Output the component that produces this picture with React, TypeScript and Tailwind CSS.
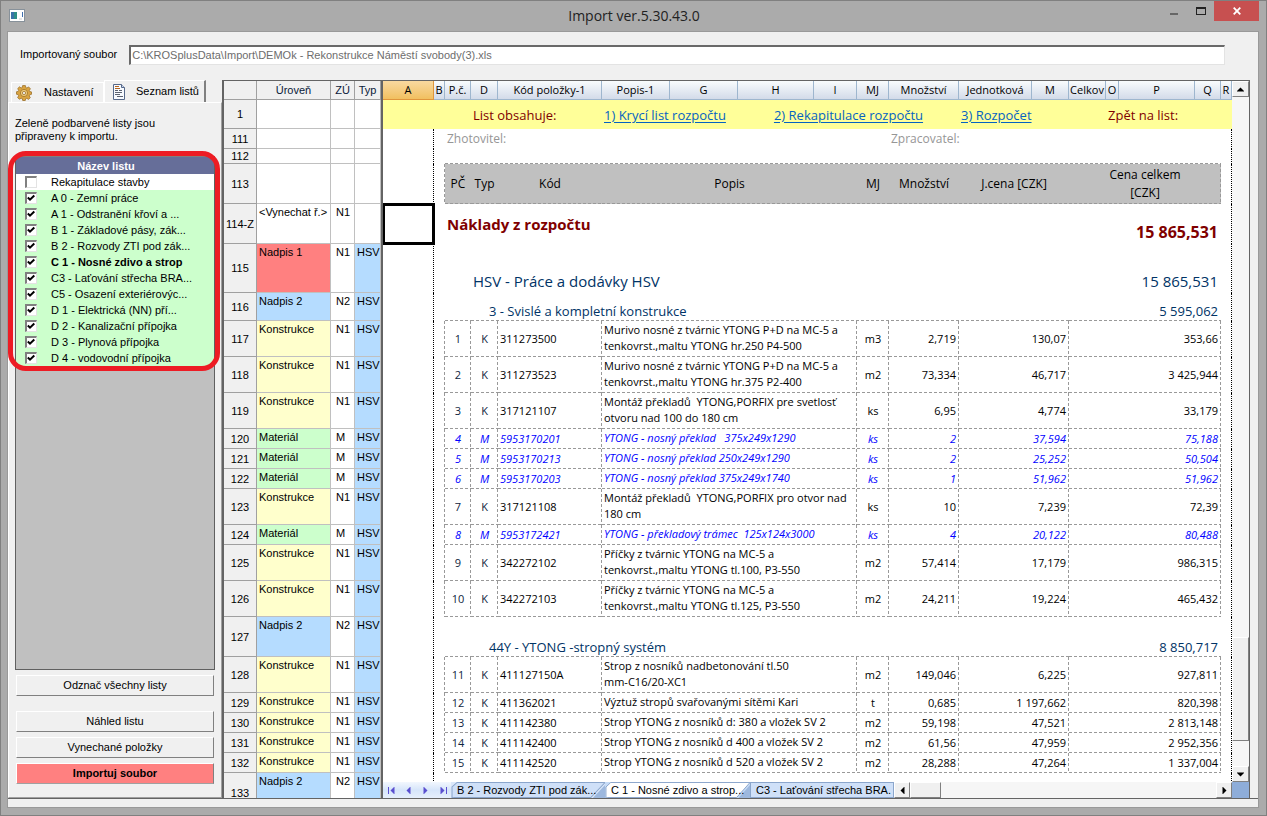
import { useState } from "react";

type Level = { no: string; h: string; level: string; zu: string; typ: string };

// výšky řádků jsou společné pro mřížku úrovní i pro list
const H = {
  r15: "h-[15px]",
  r20: "h-[20px]",
  r28: "h-[28px]",
  r29: "h-[29px]",
  r36: "h-[36px]",
  r40: "h-[40px]",
  r49: "h-[49px]",
};

const levels: Level[] = [
  { no: "1", h: H.r29, level: "", zu: "", typ: "" },
  { no: "111", h: H.r20, level: "", zu: "", typ: "" },
  { no: "112", h: H.r15, level: "", zu: "", typ: "" },
  { no: "113", h: H.r40, level: "", zu: "", typ: "" },
  { no: "114-Z", h: H.r40, level: "<Vynechat ř.>", zu: "N1", typ: "" },
  { no: "115", h: H.r49, level: "Nadpis 1", zu: "N1", typ: "HSV" },
  { no: "116", h: H.r28, level: "Nadpis 2", zu: "N2", typ: "HSV" },
  { no: "117", h: H.r36, level: "Konstrukce", zu: "N1", typ: "HSV" },
  { no: "118", h: H.r36, level: "Konstrukce", zu: "N1", typ: "HSV" },
  { no: "119", h: H.r36, level: "Konstrukce", zu: "N1", typ: "HSV" },
  { no: "120", h: H.r20, level: "Materiál", zu: "M", typ: "HSV" },
  { no: "121", h: H.r20, level: "Materiál", zu: "M", typ: "HSV" },
  { no: "122", h: H.r20, level: "Materiál", zu: "M", typ: "HSV" },
  { no: "123", h: H.r36, level: "Konstrukce", zu: "N1", typ: "HSV" },
  { no: "124", h: H.r20, level: "Materiál", zu: "M", typ: "HSV" },
  { no: "125", h: H.r36, level: "Konstrukce", zu: "N1", typ: "HSV" },
  { no: "126", h: H.r36, level: "Konstrukce", zu: "N1", typ: "HSV" },
  { no: "127", h: H.r40, level: "Nadpis 2", zu: "N2", typ: "HSV" },
  { no: "128", h: H.r36, level: "Konstrukce", zu: "N1", typ: "HSV" },
  { no: "129", h: H.r20, level: "Konstrukce", zu: "N1", typ: "HSV" },
  { no: "130", h: H.r20, level: "Konstrukce", zu: "N1", typ: "HSV" },
  { no: "131", h: H.r20, level: "Konstrukce", zu: "N1", typ: "HSV" },
  { no: "132", h: H.r20, level: "Konstrukce", zu: "N1", typ: "HSV" },
  { no: "133", h: H.r40, level: "Nadpis 2", zu: "N2", typ: "HSV" },
];

const levelColors: Record<string, string> = {
  "Nadpis 1": "bg-[#ff8080]",
  "Nadpis 2": "bg-[#b5dcff]",
  Konstrukce: "bg-[#ffffcc]",
  Materiál: "bg-[#ccffcc]",
};

// P.č., typ, kód, popis, MJ, množství, J.cena, cena celkem
type Item = [string, string, string, string, string, string, string, string];

const walls: Item[] = [
  ["1", "K", "311273500", "Murivo nosné z tvárnic YTONG P+D na MC-5 a\ntenkovrst.,maltu YTONG hr.250 P4-500", "m3", "2,719", "130,07", "353,66"],
  ["2", "K", "311273523", "Murivo nosné z tvárnic YTONG P+D na MC-5 a\ntenkovrst.,maltu YTONG hr.375 P2-400", "m2", "73,334", "46,717", "3 425,944"],
  ["3", "K", "317121107", "Montáž překladů  YTONG,PORFIX pre svetlosť\notvoru nad 100 do 180 cm", "ks", "6,95", "4,774", "33,179"],
  ["4", "M", "5953170201", "YTONG - nosný překlad   375x249x1290", "ks", "2", "37,594", "75,188"],
  ["5", "M", "5953170213", "YTONG - nosný překlad 250x249x1290", "ks", "2", "25,252", "50,504"],
  ["6", "M", "5953170203", "YTONG - nosný překlad 375x249x1740", "ks", "1", "51,962", "51,962"],
  ["7", "K", "317121108", "Montáž překladů  YTONG,PORFIX pro otvor nad\n180 cm", "ks", "10", "7,239", "72,39"],
  ["8", "M", "5953172421", "YTONG - překladový trámec  125x124x3000", "ks", "4", "20,122", "80,488"],
  ["9", "K", "342272102", "Příčky z tvárnic YTONG na MC-5 a\ntenkovrst.,maltu YTONG tl.100, P3-550", "m2", "57,414", "17,179", "986,315"],
  ["10", "K", "342272103", "Příčky z tvárnic YTONG na MC-5 a\ntenkovrst.,maltu YTONG tl.125, P3-550", "m2", "24,211", "19,224", "465,432"],
];

const ceilings: Item[] = [
  ["11", "K", "411127150A", "Strop z nosníků nadbetonování tl.50\nmm-C16/20-XC1", "m2", "149,046", "6,225", "927,811"],
  ["12", "K", "411362021", "Výztuž stropů svařovanými sítěmi Kari", "t", "0,685", "1 197,662", "820,398"],
  ["13", "K", "411142380", "Strop YTONG z nosníků d: 380 a vložek SV 2", "m2", "59,198", "47,521", "2 813,148"],
  ["14", "K", "411142400", "Strop YTONG z nosníků d 400 a vložek SV 2", "m2", "61,56", "47,959", "2 952,356"],
  ["15", "K", "411142520", "Strop YTONG z nosníků d 520 a vložek SV 2", "m2", "28,288", "47,264", "1 337,004"],
];

const columns = [
  ["A", "w-[51px]"],
  ["B", "w-[11px]"],
  ["P.č.", "w-[26px]"],
  ["D", "w-[27px]"],
  ["Kód položky-1", "w-[104px]"],
  ["Popis-1", "w-[68px]"],
  ["G", "w-[68px]"],
  ["H", ""],
  ["I", "w-[43px]"],
  ["MJ", "w-[32px]"],
  ["Množství", "w-[70px]"],
  ["Jednotková", "w-[73px]"],
  ["M", "w-[37px]"],
  ["Celkov", "w-[37px]"],
  ["O", "w-[13px]"],
  ["P", "w-[76px]"],
  ["Q", "w-[26px]"],
  ["R", "w-[11px]"],
];

const initialSheets = [
  { name: "Rekapitulace stavby", checked: false },
  { name: "A 0 - Zemní práce", checked: true },
  { name: "A 1 - Odstranění křoví a ...", checked: true },
  { name: "B 1 - Základové pásy, zák...", checked: true },
  { name: "B 2 - Rozvody ZTI pod zák...", checked: true },
  { name: "C 1 - Nosné zdivo a strop", checked: true, active: true },
  { name: "C3 - Laťování střecha BRA...", checked: true },
  { name: "C5 - Osazení exteriérovýc...", checked: true },
  { name: "D 1 - Elektrická (NN) pří...", checked: true },
  { name: "D 2 - Kanalizační přípojka", checked: true },
  { name: "D 3 - Plynová přípojka", checked: true },
  { name: "D 4 - vodovodní přípojka", checked: true },
];

// čárkované čáry buněk: spodní, pravá a obě dohromady
const dashB =
  "bg-[repeating-linear-gradient(90deg,#999_0_3px,transparent_3px_5px)] bg-[length:100%_1px] bg-bottom bg-no-repeat";
const dashR =
  "bg-[repeating-linear-gradient(#999_0_3px,transparent_3px_5px)] bg-[length:1px_100%] bg-right bg-no-repeat";
const dashBR =
  "bg-[repeating-linear-gradient(90deg,#999_0_3px,transparent_3px_5px),repeating-linear-gradient(#999_0_3px,transparent_3px_5px)] bg-[length:100%_1px,1px_100%] bg-[position:bottom,right] bg-no-repeat";

const raised = "border border-t-white border-l-white border-r-[#808080] border-b-[#808080] bg-[#f0f0f0]";

function GearIcon() {
  return (
    <svg className="h-4 w-4 flex-none" viewBox="0 0 16 16" aria-hidden="true">
      <g fill="#d9a441" stroke="#94661c" strokeWidth=".7">
        <path d="M6.6.6h2.8l.4 1.9 1.1.5 1.7-1.1 1.8 1.9-1.1 1.7.5 1.1 1.7.3v2.4l-1.8.5-.5 1.1 1.1 1.7-1.8 1.8-1.7-1.1-1.1.5-.4 1.7H6.7l-.4-1.8-1.2-.5-1.7 1.1-1.8-1.8 1.1-1.7-.5-1.2-1.8-.4V6.8l1.8-.4.5-1.1-1-1.7 1.8-1.8L5.1 3l1.1-.5z" />
        <circle cx="8" cy="8" r="3.6" fill="#f0cd7d" />
        <circle cx="8" cy="8" r="1.6" fill="#f0f0f0" />
      </g>
    </svg>
  );
}

function DocIcon() {
  return (
    <svg className="h-4 w-3 flex-none" viewBox="0 0 12 16" aria-hidden="true">
      <path d="M.5.5h8l3 3v12H.5z" fill="#f7faff" stroke="#56698a" />
      <path d="M8.5.5v3h3" fill="#c9d6ea" stroke="#56698a" />
      <path d="M2 2.5h4M2 4.5h5" stroke="#b5651d" />
      <path d="M2 6.5h3M6 6.5h3M2 8.5h7M2 10.5h5M4 12.5h6" stroke="#5b6270" />
    </svg>
  );
}

function Arrow({ d }: { d: string }) {
  return (
    <svg className="h-[7px] w-[7px]" viewBox="0 0 7 7" aria-hidden="true">
      <path d={d} fill="currentColor" />
    </svg>
  );
}

const UP = "M-.5 5.500 3.500 1.500 7.500 5.500z";
const DOWN = "M-.5 1.500 3.500 5.500 7.500 1.500z";
const LEFT = "M5.500-.5 1.500 3.500 5.500 7.500z";
const RIGHT = "M1.500-.5 5.500 3.500 1.500 7.500z";

function TitleBar() {
  return (
    <header className="flex h-[30px] flex-none items-start pr-[7px] text-[#222]">
      <div className="flex w-[135px] pt-[8px] pl-[8px]">
        <svg className="h-[13px] w-4" viewBox="0 0 16 13" aria-hidden="true">
          <rect x=".5" y=".5" width="15" height="12" fill="#fff" stroke="#87919a" />
          <rect x="2" y="3" width="6" height="7" fill="#2f8f86" />
          <path d="M2 3h3v7H2z" fill="#3b73a8" />
          <path d="M13.500 3v5" stroke="#3f6fb0" />
          <path d="M10 10h3" stroke="#ccc" />
        </svg>
      </div>
      <h1 className="flex-1 pt-[4px] pl-2 text-center font-['Open_Sans',sans-serif] text-[14px] leading-[22px]">
        Import ver.5.30.43.0
      </h1>
      <div className="flex w-[135px] justify-end">
        <button aria-label="Minimalizovat" className="flex h-5 w-[27px] justify-center pt-3">
          <span className="h-[2px] w-2 bg-[#666]" />
        </button>
        <button aria-label="Maximalizovat" className="flex h-5 w-[27px] justify-center pt-[6px]">
          <span className="h-2 w-[10px] border border-t-2 border-[#222]" />
        </button>
        <button aria-label="Zavřít" className="flex h-5 w-[45px] items-center justify-center bg-[#c75050] text-white">
          <svg className="h-2 w-2" viewBox="0 0 8 8" aria-hidden="true">
            <path d="M.7.7l6.600 6.600M7.300.7.7 7.300" stroke="currentColor" strokeWidth="1.8" />
          </svg>
        </button>
      </div>
    </header>
  );
}

function SheetList() {
  const [sheets, setSheets] = useState(initialSheets);
  const toggle = (index: number) =>
    setSheets(sheets.map((s, i) => (i === index ? { ...s, checked: !s.checked } : s)));

  return (
    <div className="relative mx-[6px] mt-[13px] min-h-0 flex-1 border border-t-[#808080] border-r-[#606060] border-b-[#606060] border-l-[#606060] bg-[#c0c0c0]">
      <h2 className="h-[17px] bg-[#666e99] pr-[18px] text-center font-bold leading-[18px] text-white">Název listu</h2>
      <ul>
        {sheets.map((s, i) => (
          <li key={s.name} className={s.checked ? "bg-[#ccffcc]" : "bg-white"}>
            <label className="flex h-4 items-center pl-[9px]">
              <span className="relative flex-none">
                <input
                  type="checkbox"
                  checked={s.checked}
                  onChange={() => toggle(i)}
                  className="peer block h-3 w-3 appearance-none border-t-2 border-r border-b border-l-2 border-t-[#808080] border-r-[#e3e3e3] border-b-[#e3e3e3] border-l-[#808080] bg-white"
                />
                <svg className="pointer-events-none absolute top-[2px] left-[2px] hidden h-2 w-2 peer-checked:block" viewBox="0 0 8 8" aria-hidden="true">
                  <path d="M.8 3.500 3 5.700 7.300 1.500" fill="none" stroke="#000" strokeWidth="2" />
                </svg>
              </span>
              <span className={s.active ? "ml-[14px] font-bold whitespace-nowrap" : "ml-[14px] whitespace-nowrap"}>
                {s.name}
              </span>
            </label>
          </li>
        ))}
      </ul>
      {/* zvýraznění seznamu */}
      <div className="pointer-events-none absolute -top-[6px] -right-[6px] -left-[8px] h-[220px] rounded-[18px] border-[5px] border-[#ed1c24]" />
    </div>
  );
}

function Sidebar() {
  return (
    <aside className="flex w-[214px] flex-none flex-col">
      <div className="flex h-[22px] flex-none items-end pl-[3px]" role="tablist">
        <button role="tab" className="flex h-[20px] w-[93px] items-center gap-[12px] border-t border-r border-l border-white pl-1">
          <GearIcon />
          Nastavení
        </button>
        <button role="tab" aria-selected="true" className="flex h-[22px] w-[102px] items-center gap-[11px] border-t border-l border-t-white border-l-white border-r-2 border-r-[#808080] pl-[8px]">
          <DocIcon />
          Seznam listů
        </button>
      </div>
      <div className="flex min-h-0 flex-1 flex-col border border-t-white border-r-[#a0a0a0] border-b-[#a0a0a0] border-l-white pb-[13px]">
        <p className="mt-[14px] pl-[6px] leading-[13px]">
          Zeleně podbarvené listy jsou
          <br />
          připraveny k importu.
        </p>
        <SheetList />
        <div className="mt-[5px] flex flex-none flex-col gap-[5px] px-[7px]">
          <button className={`h-[21px] ${raised}`}>Odznač všechny listy</button>
          <button className={`mt-[10px] h-[21px] ${raised}`}>Náhled listu</button>
          <button className={`h-[21px] ${raised}`}>Vynechané položky</button>
          <button className="h-[21px] border border-t-white border-r-[#808080] border-b-[#a0a0a0] border-l-white bg-[#ff8080] font-bold">
            Importuj soubor
          </button>
        </div>
      </div>
    </aside>
  );
}

function LevelGrid() {
  const head = "h-[19px] border-r border-b border-[#a0a0a0] bg-[#f0f0f0] font-normal";
  const cell = "border-r border-b border-[#c0c0c0] align-top";

  return (
    <section aria-label="Úrovně" className="w-[161px] flex-none overflow-hidden border-r-2 border-l-2 border-[#646464] bg-white">
      <table className="w-full table-fixed border-separate border-spacing-0 leading-[13px] whitespace-nowrap">
        <colgroup>
          <col className="w-[33px]" />
          <col />
          <col className="w-[24px]" />
          <col className="w-[26px]" />
        </colgroup>
        <thead>
          <tr className="text-[#0a1a3a]">
            <th className={head}></th>
            <th className={head}>Úroveň</th>
            <th className={head}>ZÚ</th>
            <th className={head}>Typ</th>
          </tr>
        </thead>
        <tbody>
          {levels.map((l) => (
            <tr key={l.no}>
              <th className={`${l.h} border-r border-b border-[#a0a0a0] bg-[#f0f0f0] pt-px text-center font-normal`}>{l.no}</th>
              <td className={`${cell} pt-[2px] pl-[2px] ${levelColors[l.level] ?? ""}`}>{l.level}</td>
              <td className={`${cell} pt-[2px] pl-[5px]`}>{l.zu}</td>
              <td className={`${cell} pt-[2px] pl-[2px] ${l.typ ? "bg-[#b5dcff]" : ""}`}>{l.typ}</td>
            </tr>
          ))}
        </tbody>
      </table>
    </section>
  );
}

const pageBreak = "border-r border-dotted border-black";

function ItemRow({ item }: { item: Item }) {
  const [no, type, code, text, unit, qty, price, total] = item;
  const height = text.includes("\n") ? H.r36 : H.r20;
  return (
    <tr className={type === "M" ? "text-[#0000ff] italic" : ""}>
      <td className={`${height} ${pageBreak}`}></td>
      <td className={dashR}></td>
      <td className={`${dashBR} text-center ${type === "M" ? "" : "text-[#0f2540]"}`}>{no}</td>
      <td className={`${dashBR} text-center ${type === "M" ? "" : "text-[#0f2540]"}`}>{type}</td>
      <td className={`${dashBR} pb-px pl-[2px]`}>{code}</td>
      <td colSpan={4} className={`${dashBR} pb-[2px] pl-[2px] whitespace-pre`}>{text}</td>
      <td className={`${dashBR} pb-px text-center`}>{unit}</td>
      <td className={`${dashBR} pr-[3px] text-right`}>{qty}</td>
      <td colSpan={2} className={`${dashBR} pr-[3px] text-right`}>{price}</td>
      <td colSpan={4} className={`${dashBR} pr-[3px] text-right`}>{total}</td>
      <td className={pageBreak}></td>
    </tr>
  );
}

function SectionRow({ title, total, height }: { title: string; total: string; height: string }) {
  return (
    <tr className="text-[13px] leading-5 text-[#003366]">
      <td className={`${height} ${pageBreak}`}></td>
      <td></td>
      <td className={dashB}></td>
      <td colSpan={10} className={`${dashB} pl-[18px] align-bottom`}>{title}</td>
      <td colSpan={4} className={`${dashB} pr-[3px] text-right align-bottom`}>{total}</td>
      <td className={pageBreak}></td>
    </tr>
  );
}

function SheetTable() {
  const link = "text-[#0563c1] underline underline-offset-2";
  const headCell = `${dashB} bg-[#c0c0c0] text-center font-normal`;

  return (
    <div className="min-h-0 flex-1 overflow-hidden bg-white">
      <table className="w-full table-fixed border-separate border-spacing-0 text-left font-['Open_Sans',sans-serif] text-[11px] leading-4 whitespace-nowrap">
        <colgroup>
          {columns.map(([name, width]) => (
            <col key={name} className={width} />
          ))}
        </colgroup>
        <thead>
          <tr>
            {columns.map(([name]) => (
              <th
                key={name}
                className={
                  name === "A"
                    ? "h-[19px] border-r border-b border-[#e0963c] bg-linear-to-b from-[#f9d99f] to-[#f1c05f] text-center font-normal"
                    : "h-[19px] border-r border-b border-[#9eb6ce] bg-linear-to-b from-[#f9fcfd] to-[#d3dbe9] text-center font-normal"
                }
              >
                <span className="flex h-4 justify-center">{name}</span>
              </th>
            ))}
          </tr>
        </thead>
        <tbody>
          <tr className="bg-[#ffff99] text-[13px] text-[#800000]">
            <td className={H.r29} colSpan={3}></td>
            <td colSpan={2} className="pl-[2px]">List obsahuje:</td>
            <td colSpan={2} className="pl-[2px]"><a href="#kryci-list" className={link}>1) Krycí list rozpočtu</a></td>
            <td colSpan={4} className="text-center"><a href="#rekapitulace" className={link}>2) Rekapitulace rozpočtu</a></td>
            <td colSpan={3} className="pl-[2px]"><a href="#rozpocet" className={link}>3) Rozpočet</a></td>
            <td colSpan={4} className="pl-[2px]">Zpět na list:</td>
          </tr>
          <tr className="text-[12px] text-[#969696]">
            <td className={`${H.r20} ${pageBreak}`}></td>
            <td></td>
            <td colSpan={8} className="pl-[2px]">Zhotovitel:</td>
            <td colSpan={7} className="pl-[2px]">Zpracovatel:</td>
            <td className={pageBreak}></td>
          </tr>
          <tr>
            <td className={`${H.r15} ${pageBreak}`}></td>
            <td></td>
            <td colSpan={15} className={dashB}></td>
            <td className={pageBreak}></td>
          </tr>
          <tr className="text-[12px]">
            <td className={`${H.r40} ${pageBreak}`}></td>
            <td className={dashR}></td>
            <th className={headCell}>PČ</th>
            <th className={headCell}>Typ</th>
            <th className={headCell}>Kód</th>
            <th colSpan={4} className={headCell}>Popis</th>
            <th className={headCell}>MJ</th>
            <th className={headCell}>Množství</th>
            <th colSpan={2} className={headCell}>J.cena [CZK]</th>
            <th colSpan={4} className={`${dashBR} bg-[#c0c0c0] text-center leading-[18px] font-normal`}>
              Cena celkem
              <br />
              [CZK]
            </th>
            <td className={pageBreak}></td>
          </tr>
          <tr className="text-[15px] leading-5 font-bold text-[#800000]">
            <td className={`${H.r40} border-r border-black outline-[3px] -outline-offset-2 outline-black`}></td>
            <td></td>
            <td colSpan={11} className="pl-[2px]">Náklady z rozpočtu</td>
            <td colSpan={4} className="pr-[3px] text-right align-bottom text-[16px] leading-6">15 865,531</td>
            <td className={pageBreak}></td>
          </tr>
          <tr className="text-[15px] leading-6 text-[#003366]">
            <td className={`${H.r49} ${pageBreak}`}></td>
            <td colSpan={2}></td>
            <td colSpan={10} className="pl-[2px] align-bottom">HSV - Práce a dodávky HSV</td>
            <td colSpan={4} className="pr-[3px] text-right align-bottom">15 865,531</td>
            <td className={pageBreak}></td>
          </tr>
          <SectionRow title="3 - Svislé a kompletní konstrukce" total="5 595,062" height={H.r28} />
          {walls.map((item) => (
            <ItemRow key={item[0]} item={item} />
          ))}
          <SectionRow title="44Y - YTONG -stropný systém" total="8 850,717" height={H.r40} />
          {ceilings.map((item) => (
            <ItemRow key={item[0]} item={item} />
          ))}
          <tr>
            <td className={`${H.r40} ${pageBreak}`}></td>
            <td colSpan={16}></td>
            <td className={pageBreak}></td>
          </tr>
        </tbody>
      </table>
    </div>
  );
}

function SheetTab({ name, width, active }: { name: string; width: string; active?: boolean }) {
  return (
    <button role="tab" aria-selected={active} className={`relative h-4 ${width} flex-none text-left whitespace-nowrap`}>
      <svg className="absolute inset-0 h-full w-full" viewBox="0 0 152 16" preserveAspectRatio="none" aria-hidden="true">
        <path d="M0 0h152v16H0z" fill={active ? "#c5daf5" : "#dbe8fa"} />
        <path d="M152 3v13h-12z" fill="#9db8de" />
        <path d="M1 16V5l5-4.500h146L138 15.500H3z" fill={active ? "#fff" : "#cfe0f8"} stroke="#8ba6cc" />
      </svg>
      <span className="relative pl-[6px]">{name}</span>
    </button>
  );
}

function BottomBar() {
  const nav = "flex h-4 w-[17px] items-center justify-center";
  return (
    <div className="flex h-4 flex-none bg-[#f6f6f6]">
      <div className="flex flex-none bg-linear-to-b from-[#f2f7fe] via-[#d6e5fa] to-[#e6effc] text-[#5a4fcf]">
        <button className={nav} aria-label="První list"><span className="h-[7px] w-px bg-current" /><Arrow d={LEFT} /></button>
        <button className={nav} aria-label="Předchozí list"><Arrow d={LEFT} /></button>
        <button className={nav} aria-label="Další list"><Arrow d={RIGHT} /></button>
        <button className={nav} aria-label="Poslední list"><Arrow d={RIGHT} /><span className="h-[7px] w-px bg-current" /></button>
      </div>
      <div className="flex flex-none border-r border-[#8ba6cc] bg-[#cfe0f8]" role="tablist">
        <SheetTab name="B 2 - Rozvody ZTI pod zák..." width="w-[154px]" />
        <SheetTab name="C 1 - Nosné zdivo a strop..." width="w-[145px]" active />
        <button role="tab" className="h-4 w-[143px] border-t border-b border-l border-[#8ba6cc] pl-[5px] text-left leading-[14px] whitespace-nowrap">
          C3 - Laťování střecha BRA.
        </button>
      </div>
      <button aria-label="Posunout vlevo" className={`flex w-4 items-center justify-center ${raised}`}><Arrow d={LEFT} /></button>
      <div className={`w-[31px] ${raised}`} />
      <div className="flex-1" />
      <button aria-label="Posunout vpravo" className={`flex w-4 items-center justify-center ${raised}`}><Arrow d={RIGHT} /></button>
      <div className="w-[17px] bg-[#8eadd9]" />
    </div>
  );
}

function VerticalScroll() {
  return (
    <div className="flex w-[17px] flex-none flex-col bg-[#f6f6f6]">
      <button aria-label="Posunout nahoru" className={`flex h-4 items-center justify-center ${raised}`}><Arrow d={UP} /></button>
      <div className="flex-1" />
      <div className={`mb-[25px] h-[104px] ${raised}`} />
      <button aria-label="Posunout dolů" className={`flex h-4 items-center justify-center ${raised}`}><Arrow d={DOWN} /></button>
    </div>
  );
}

export default function App() {
  return (
    <div className="flex h-screen flex-col border border-[#808080] bg-[#ababab] font-['Liberation_Sans',Arial,sans-serif] text-[11px] text-black">
      <TitleBar />
      <main className="mr-[7px] mb-[7px] ml-[6px] flex min-h-0 flex-1 flex-col border border-[#999] bg-[#f0f0f0] pb-[8px]">
        <div className="mb-[3px] flex h-[45px] flex-none items-center gap-[12px] pr-[33px] pl-[12px]">
          <label htmlFor="soubor">Importovaný soubor</label>
          <input
            id="soubor"
            readOnly
            value="C:\KROSplusData\Import\DEMOk - Rekonstrukce Náměstí svobody(3).xls"
            className="h-[20px] min-w-0 flex-1 border-t-2 border-r border-b border-l-2 border-t-[#696969] border-r-[#e3e3e3] border-b-[#e3e3e3] border-l-[#696969] bg-white pl-px text-[#6d6d6d] outline-none"
          />
        </div>
        <div className="flex min-h-0 flex-1 border-b border-[#646464] pr-[8px]">
          <Sidebar />
          <div className="flex min-w-0 flex-1 border-t border-r border-[#646464]">
            <LevelGrid />
            <div className="flex min-w-0 flex-1 flex-col">
              <div className="flex min-h-0 flex-1">
                <div className="flex min-w-0 flex-1 flex-col">
                  <SheetTable />
                </div>
                <VerticalScroll />
              </div>
              <BottomBar />
            </div>
          </div>
        </div>
      </main>
    </div>
  );
}
